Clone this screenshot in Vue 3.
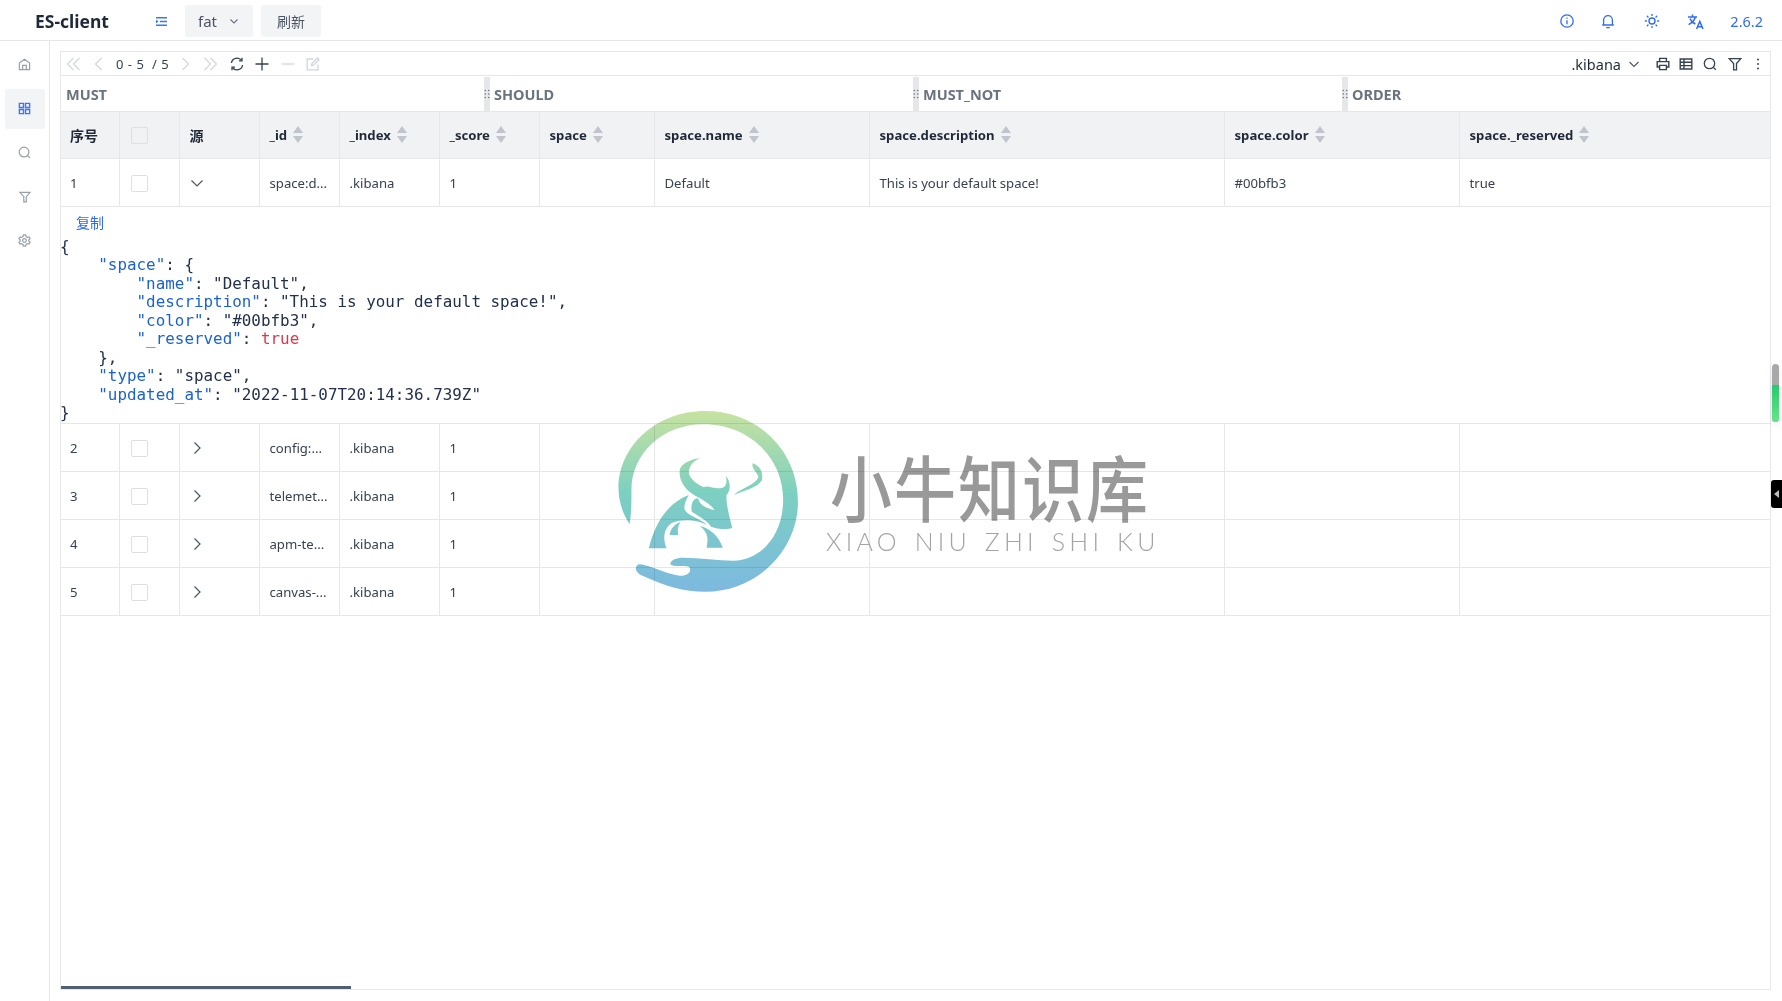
<script setup>
import { ref } from 'vue'

const columns = [
  { key: 'seq', label: '序号', width: 58, cjk: true },
  { key: 'check', label: '', width: 60 },
  { key: 'source', label: '源', width: 80, cjk: true },
  { key: '_id', label: '_id', width: 80, sort: true },
  { key: '_index', label: '_index', width: 100, sort: true },
  { key: '_score', label: '_score', width: 100, sort: true },
  { key: 'space', label: 'space', width: 115, sort: true },
  { key: 'name', label: 'space.name', width: 215, sort: true },
  { key: 'description', label: 'space.description', width: 355, sort: true },
  { key: 'color', label: 'space.color', width: 235, sort: true },
  { key: 'reserved', label: 'space._reserved', width: 311, sort: true },
]

const rows = ref([
  { seq: 1, _id: 'space:d...', _index: '.kibana', _score: 1, name: 'Default', description: 'This is your default space!', color: '#00bfb3', reserved: 'true', open: true },
  { seq: 2, _id: 'config:...', _index: '.kibana', _score: 1 },
  { seq: 3, _id: 'telemet...', _index: '.kibana', _score: 1 },
  { seq: 4, _id: 'apm-te...', _index: '.kibana', _score: 1 },
  { seq: 5, _id: 'canvas-...', _index: '.kibana', _score: 1 },
])

const filters = ['MUST', 'SHOULD', 'MUST_NOT', 'ORDER']
</script>

<template>
  <div class="page">
    <header class="top">
      <div class="brand">ES-client</div>
      <svg class="menu-icon" width="11" height="9" viewBox="0 0 11 9" fill="none" stroke="#3b76f6" stroke-width="1.4">
        <path d="M0 .8h11M4 4.5h7M0 8.2h11" />
        <path d="M0 2.8l2.6 1.7L0 6.2z" fill="#3b76f6" stroke="none" />
      </svg>
      <div class="pill select">
        <span>fat</span>
        <svg width="12" height="12" viewBox="0 0 12 12" fill="none" stroke="#6b7280" stroke-width="1.1"><path d="M2.5 4.5L6 8l3.5-3.5" /></svg>
      </div>
      <div class="pill refresh">刷新</div>
      <div class="top-right">
        <svg width="16" height="16" viewBox="0 0 16 16" fill="none" stroke="#2f6bf2" stroke-width="1.3">
          <circle cx="8" cy="8" r="6.2" /><path d="M8 7.2v4" /><path d="M8 4.4v1.4" />
        </svg>
        <svg class="bell" width="14" height="16" viewBox="0 0 14 16" fill="none" stroke="#2f6bf2" stroke-width="1.3">
          <path d="M2.6 11.5V7a4.4 4.4 0 0 1 8.8 0v4.5M1.2 12h11.6M5.2 14.6h3.6" />
        </svg>
        <svg class="sun" width="16" height="16" viewBox="0 0 16 16" fill="none" stroke="#2f6bf2" stroke-width="1.4">
          <circle cx="8" cy="8" r="3" />
          <path stroke-linecap="round" d="M8 1.4v1M8 13.6v1M1.4 8h1M13.6 8h1M3.3 3.3l.7.7M12 12l.7.7M3.3 12.7l.7-.7M12 4l.7-.7" />
        </svg>
        <svg class="lang" width="18" height="17" viewBox="0 0 18 17" fill="none" stroke="#2f6bf2" stroke-width="1.5">
          <path d="M1 4h9M5.5 1.5V4M8.4 4C7.4 7.4 5 10 1.6 11.6M3 5.6c1 2.4 3 4.4 5.4 5.4" />
          <path d="M9.6 16l3.2-7.6L16 16M10.8 13.8h4" />
        </svg>
        <span class="version">2.6.2</span>
      </div>
    </header>

    <div class="body">
      <aside class="side">
        <div class="side-item">
          <svg width="13" height="13" viewBox="0 0 14 14" fill="none" stroke="#9aa0a8" stroke-width="1.3">
            <path d="M1.5 12.5V5.4L7 1.4l5.5 4v7.1zM5 12.5V8h4v4.5" />
          </svg>
        </div>
        <div class="side-item active">
          <svg width="13" height="13" viewBox="0 0 14 14" fill="none" stroke="#3b76f6" stroke-width="1.5">
            <path d="M1.5 1.5h4.4v4.4H1.5zM8.1 1.5h4.4v4.4H8.1zM1.5 8.1h4.4v4.4H1.5zM8.1 8.1h4.4v4.4H8.1z" />
          </svg>
        </div>
        <div class="side-item">
          <svg width="13" height="13" viewBox="0 0 14 14" fill="none" stroke="#9aa0a8" stroke-width="1.3">
            <circle cx="6.5" cy="6.5" r="5.2" /><path d="M10.4 10.4l2.4 2.4" />
          </svg>
        </div>
        <div class="side-item">
          <svg width="12" height="12" viewBox="0 0 14 14" fill="none" stroke="#9aa0a8" stroke-width="1.4">
            <path d="M1 1.6h12L8.5 6.6v6.2H5.6V6.6z" />
          </svg>
        </div>
        <div class="side-item">
          <svg width="13" height="13" viewBox="0 0 14 14" fill="none" stroke="#9aa0a8" stroke-width="1.3">
            <path d="M5.8 1h2.4l.4 1.7 1.5.9 1.7-.5 1.2 2-1.3 1.2v1.4l1.3 1.2-1.2 2-1.7-.5-1.5.9L8.2 13H5.8l-.4-1.7-1.5-.9-1.7.5-1.2-2 1.3-1.2V6.3L1 5.1l1.2-2 1.7.5 1.5-.9z" />
            <circle cx="7" cy="7" r="2" />
          </svg>
        </div>
      </aside>

      <main class="main">
        <div class="toolbar">
          <svg class="t1" width="15" height="14" viewBox="0 0 15 14" fill="none" stroke="#d1d5db" stroke-width="1.2"><path d="M7.5 1L1.5 7l6 6M13.5 1l-6 6 6 6" /></svg>
          <svg class="t2" width="9" height="14" viewBox="0 0 9 14" fill="none" stroke="#d1d5db" stroke-width="1.2"><path d="M7.5 1L1.5 7l6 6" /></svg>
          <span class="pager">0 - 5&nbsp;&nbsp;/ 5</span>
          <svg class="t3" width="9" height="14" viewBox="0 0 9 14" fill="none" stroke="#d1d5db" stroke-width="1.2"><path d="M1.5 1l6 6-6 6" /></svg>
          <svg class="t4" width="15" height="14" viewBox="0 0 15 14" fill="none" stroke="#d1d5db" stroke-width="1.2"><path d="M1.5 1l6 6-6 6M7.5 1l6 6-6 6" /></svg>
          <svg class="t5" width="14" height="14" viewBox="0 0 14 14" fill="none" stroke="#374151" stroke-width="1.3">
            <path d="M1.4 6A5.7 5.7 0 0 1 11.6 3.4M12.6 8A5.7 5.7 0 0 1 2.4 10.6" />
            <path d="M12 .8v3h-3M2 13.2v-3h3" />
          </svg>
          <svg class="t6" width="14" height="14" viewBox="0 0 14 14" fill="none" stroke="#374151" stroke-width="1.3"><path d="M7 .5v13M.5 7h13" /></svg>
          <svg class="t7" width="14" height="14" viewBox="0 0 14 14" fill="none" stroke="#d1d5db" stroke-width="1.3"><path d="M.5 7h13" /></svg>
          <svg class="t8" width="14" height="14" viewBox="0 0 14 14" fill="none" stroke="#d1d5db" stroke-width="1.3">
            <path d="M12 7.5v5.3H1.2V2H7M5.5 8.6l.4-2L11.4 1l1.7 1.7-5.6 5.5z" />
          </svg>
          <div class="tool-right">
            <span class="index-name">.kibana</span>
            <svg class="r0" width="12" height="12" viewBox="0 0 12 12" fill="none" stroke="#4b5563" stroke-width="1.1"><path d="M1.5 4L6 8.5 10.5 4" /></svg>
            <svg class="r1" width="14" height="14" viewBox="0 0 14 14" fill="none" stroke="#374151" stroke-width="1.4">
              <path d="M3.6 4.5V1.4h6.8v3.1M3.4 10H1.2V4.6h11.6V10h-2.2M3.6 8.4h6.8v4.2H3.6z" />
            </svg>
            <svg class="r2" width="14" height="14" viewBox="0 0 14 14" fill="none" stroke="#374151" stroke-width="1.4">
              <path d="M1.2 2h11.6v10H1.2zM1.2 5.3h11.6M1.2 8.6h11.6M5 2v10" />
            </svg>
            <svg class="r3" width="14" height="14" viewBox="0 0 14 14" fill="none" stroke="#374151" stroke-width="1.3">
              <circle cx="6.5" cy="6.5" r="5.2" /><path d="M10.4 10.4l2.4 2.4" />
            </svg>
            <svg class="r4" width="14" height="14" viewBox="0 0 14 14" fill="none" stroke="#374151" stroke-width="1.3">
              <path d="M1.2 1.6h11.6L8.5 6.6v6.2H5.6V6.6z" />
            </svg>
            <svg class="r5" width="4" height="14" viewBox="0 0 4 14" fill="#4b5563">
              <circle cx="2" cy="2.5" r="1.1" /><circle cx="2" cy="7" r="1.1" /><circle cx="2" cy="11.5" r="1.1" />
            </svg>
          </div>
        </div>

        <div class="filters">
          <div v-for="(f, i) in filters" :key="f" class="filter-cell">
            <div v-if="i > 0" class="handle">
              <svg width="6" height="10" viewBox="0 0 6 10" fill="#6b7280">
                <circle cx="1.3" cy="1.5" r=".8" /><circle cx="4.7" cy="1.5" r=".8" />
                <circle cx="1.3" cy="5" r=".8" /><circle cx="4.7" cy="5" r=".8" />
                <circle cx="1.3" cy="8.5" r=".8" /><circle cx="4.7" cy="8.5" r=".8" />
              </svg>
            </div>
            <span class="filter-name">{{ f }}</span>
          </div>
        </div>

        <table class="grid">
          <colgroup>
            <col v-for="c in columns" :key="c.key" :style="{ width: c.width + 'px' }" />
          </colgroup>
          <thead>
            <tr>
              <th v-for="c in columns" :key="c.key">
                <span v-if="c.key === 'check'" class="box"></span>
                <span v-else class="th-in" :class="{ cjk: c.cjk }">
                  {{ c.label }}
                  <span v-if="c.sort" class="sort"><i class="up"></i><i class="down"></i></span>
                </span>
              </th>
            </tr>
          </thead>
          <tbody>
            <template v-for="r in rows" :key="r.seq">
              <tr class="data-row">
                <td>{{ r.seq }}</td>
                <td><span class="box"></span></td>
                <td>
                  <svg class="arrow" width="14" height="14" viewBox="0 0 14 14" fill="none" stroke="#4b5563" stroke-width="1.2">
                    <path v-if="r.open" d="M1.5 4.5L7 10l5.5-5.5" />
                    <path v-else d="M4.5 1.5L10 7l-5.5 5.5" />
                  </svg>
                </td>
                <td>{{ r._id }}</td>
                <td>{{ r._index }}</td>
                <td>{{ r._score }}</td>
                <td></td>
                <td>{{ r.name }}</td>
                <td>{{ r.description }}</td>
                <td>{{ r.color }}</td>
                <td>{{ r.reserved }}</td>
              </tr>
              <tr v-if="r.open" class="expand-row">
                <td colspan="11">
                  <a class="copy">复制</a>
                  <pre class="code"><span class="p">{</span>
    <span class="k">"space"</span><span class="p">: {</span>
        <span class="k">"name"</span><span class="p">: "Default",</span>
        <span class="k">"description"</span><span class="p">: "This is your default space!",</span>
        <span class="k">"color"</span><span class="p">: "#00bfb3",</span>
        <span class="k">"_reserved"</span><span class="p">: </span><span class="b">true</span>
    <span class="p">},</span>
    <span class="k">"type"</span><span class="p">: "space",</span>
    <span class="k">"updated_at"</span><span class="p">: "2022-11-07T20:14:36.739Z"</span>
<span class="p">}</span></pre>
                </td>
              </tr>
            </template>
          </tbody>
        </table>

        <div class="fill"></div>
        <div class="hscroll"><div class="hthumb"></div></div>
      </main>
    </div>

    <!-- 右側のスクロールつまみ -->
    <div class="pill-scroll"><div class="pill-green"></div></div>
    <div class="side-tab"><i></i></div>

    <!-- 透かし -->
    <div class="watermark">
      <svg class="wm-logo" width="222" height="210" viewBox="0 0 600 630" preserveAspectRatio="none">
        <defs>
          <linearGradient id="wm" gradientUnits="userSpaceOnUse" x1="0" y1="33" x2="0" y2="575">
            <stop offset="0" stop-color="#c8e2a0" />
            <stop offset=".45" stop-color="#7cd0c0" />
            <stop offset="1" stop-color="#7db9e0" />
          </linearGradient>
        </defs>
        <g fill="url(#wm)">
          <path d="M80 372C60 340 50 300 50 265C50 140 150 33 285 33C425 33 535 150 535 305C535 450 425 575 285 575C225 575 180 560 110 525C95 515 92 500 105 493C125 490 170 520 215 527C240 528 250 510 240 500C225 497 200 502 190 493C190 480 205 473 225 473C270 473 320 482 360 482C440 480 495 400 495 300C495 170 400 73 280 73C170 73 85 160 85 270C85 310 85 340 80 372Z" />
          <path d="M270 175C240 178 215 195 215 215C215 250 235 275 270 295C285 305 300 315 310 330C285 325 270 315 265 295C250 295 245 315 248 335C260 345 290 360 300 380C320 388 345 390 357 383C350 350 340 310 342 285C355 270 352 240 340 228C345 250 340 262 325 265C300 265 290 255 280 262C260 250 240 235 240 215C242 195 255 182 270 175Z" />
          <path d="M240 285C190 305 150 360 132 445L180 445C170 420 170 385 195 368C225 355 265 360 290 375C270 355 230 345 228 325C228 310 235 295 240 285Z" />
          <path d="M217 367C205 370 190 385 188 405L212 405C208 390 212 378 217 367Z" />
          <path d="M270 378C295 385 320 405 332 443L288 443C292 420 295 400 270 378Z" />
          <path d="M412 190C430 195 442 215 438 240C425 265 390 270 362 285C380 265 420 255 428 232C425 215 410 210 412 190Z" />
        </g>
      </svg>
      <div class="wm-text">
        <div class="wm-cn">小牛知识库</div>
        <div class="wm-en">XIAO NIU ZHI SHI KU</div>
      </div>
    </div>
  </div>
</template>

<style>
html, body {
  margin: 0;
  background: #fff;
}
</style>

<style scoped>
.page {
  position: relative;
  width: 1782px;
  height: 1001px;
  overflow: hidden;
  display: flex;
  flex-direction: column;
  font-family: "Noto Sans", "Noto Sans CJK SC", sans-serif;
  font-size: 13.15px;
  color: #374151;
}

.top {
  height: 41px;
  flex: none;
  display: flex;
  align-items: center;
  padding-top: 2px;
  border-bottom: 1px solid #e5e7eb;
  box-sizing: border-box;
}
.brand {
  margin-left: 35px;
  width: 121px;
  font-size: 17.5px;
  font-weight: 700;
  color: #1f2937;
}
.menu-icon {
  margin-right: 18px;
}
.pill {
  height: 32px;
  background: #f3f4f6;
  border-radius: 3px;
  display: flex;
  align-items: center;
  color: #4b5563;
  font-size: 14px;
}
.select {
  width: 68px;
  padding: 0 13px;
  box-sizing: border-box;
  justify-content: space-between;
  margin-right: 8px;
  font-size: 15px;
}
.refresh {
  width: 60px;
  justify-content: center;
}
.top-right {
  margin-left: auto;
  display: flex;
  align-items: center;
  margin-right: 19px;
  color: #2f6bf2;
}
.bell { margin-left: 26px; }
.sun { margin-left: 29px; }
.lang { margin-left: 27px; }
.version {
  font-size: 14.5px;
  margin-left: 25px;
}

.body {
  flex: 1;
  display: flex;
  min-height: 0;
}
.side {
  width: 44px;
  flex: none;
  border-right: 1px solid #e5e7eb;
  padding: 4px 0 0 5px;
  box-sizing: content-box;
  margin-right: 10px;
  display: flex;
  flex-direction: column;
  gap: 4px;
}
.side-item {
  width: 40px;
  height: 40px;
  border-radius: 3px;
  display: flex;
  align-items: center;
  justify-content: center;
}
.side-item svg {
  margin: 0 1px 1px 0;
}
.side-item.active {
  background: #f3f4f6;
}

.main {
  width: 1711px;
  flex: none;
  margin-top: 10px;
  margin-bottom: 11px;
  display: flex;
  flex-direction: column;
  border-left: 1px solid #e5e7eb;
  border-right: 1px solid #e5e7eb;
  box-sizing: border-box;
}
.toolbar {
  height: 25px;
  flex: none;
  display: flex;
  align-items: center;
  padding-top: 1px;
  border-top: 1px solid #e5e7eb;
  border-bottom: 1px solid #e5e7eb;
  box-sizing: border-box;
  color: #374151;
}
.t1 { margin-left: 5px; }
.t2 { margin-left: 13px; }
.pager { margin-left: 13px; width: 60px; font-size: 13px; white-space: nowrap; letter-spacing: .5px; }
.t3 { margin-left: 5px; }
.t4 { margin-left: 13px; }
.t5 { margin-left: 12px; }
.t6 { margin-left: 11px; }
.t7 { margin-left: 12px; }
.t8 { margin-left: 11px; }
.tool-right {
  margin-left: auto;
  display: flex;
  align-items: center;
  margin-right: 10px;
}
.index-name {
  font-size: 14.5px;
  color: #1f2937;
}
.r0 { margin-left: 7px; }
.r1 { margin-left: 16px; }
.r2 { margin-left: 9px; }
.r3 { margin-left: 10px; }
.r4 { margin-left: 11px; }
.r5 { margin-left: 14px; }

.filters {
  height: 36px;
  flex: none;
  display: grid;
  grid-template-columns: 423px 429px 429px 1fr;
  border-bottom: 1px solid #e5e7eb;
  box-sizing: border-box;
  padding-top: 1px;
}
.filter-cell {
  display: flex;
  align-items: center;
}
.filter-cell:first-child {
  padding-left: 5px;
}
.handle {
  width: 6px;
  height: 100%;
  background: #e5e7eb;
  display: flex;
  align-items: center;
  justify-content: center;
  margin-right: 4px;
}
.filter-name {
  font-size: 14.5px;
  font-weight: 700;
  color: #6b7280;
}

.grid {
  width: 1709px;
  flex: none;
  table-layout: fixed;
  border-collapse: collapse;
}
.grid th,
.grid td {
  border-right: 1px solid #e5e7eb;
  border-bottom: 1px solid #e5e7eb;
  text-align: left;
  padding: 0 10px;
  box-sizing: border-box;
  white-space: nowrap;
  overflow: hidden;
}
.grid th:first-child,
.grid td:first-child {
  padding-left: 9px;
}
.grid th:last-child,
.grid td:last-child {
  border-right: none;
}
.grid th {
  height: 46px;
  background: #f1f2f4;
  font-size: 13.15px;
  font-weight: 700;
  color: #1f2937;
}
.grid .data-row td {
  height: 48px;
  padding-top: 1px;
  color: #374151;
}
.th-in {
  display: inline-flex;
  align-items: center;
  gap: 6px;
}
.th-in.cjk {
  font-size: 14px;
}
.sort {
  display: inline-flex;
  flex-direction: column;
  gap: 3px;
}
.sort i {
  display: block;
  width: 0;
  height: 0;
  border-left: 5.5px solid transparent;
  border-right: 5.5px solid transparent;
}
.sort .up {
  border-bottom: 7px solid #c0c4cc;
}
.sort .down {
  border-top: 7px solid #c0c4cc;
}
.box {
  display: block;
  width: 17px;
  height: 17px;
  box-sizing: border-box;
  margin: 2px 0 0 1px;
  border: 1.5px solid #dcdfe6;
  border-radius: 2px;
  background: #fff;
}
.grid th .box {
  background: #f1f2f4;
}
.arrow {
  display: block;
}
.grid .expand-row td {
  height: 216px;
  padding: 0;
  vertical-align: top;
}
.copy {
  display: block;
  height: 31px;
  line-height: 31px;
  padding-left: 15px;
  color: #2f6bf2;
  font-size: 14px;
}
.code {
  margin: 0 0 0 -1px;
  font-family: "DejaVu Sans Mono", "Liberation Mono", monospace;
  font-size: 15.9px;
  line-height: 18.5px;
}
.k { color: #1a62d0; }
.p { color: #22304d; }
.b { color: #e0364a; }

.fill {
  flex: 1;
}
.hscroll {
  height: 3px;
  flex: none;
  border-bottom: 1px solid #e5e7eb;
  box-sizing: content-box;
}
.hthumb {
  width: 290px;
  height: 3px;
  background: #515f75;
}

.pill-scroll {
  position: absolute;
  left: 1772px;
  top: 364px;
  width: 7px;
  height: 58px;
  border-radius: 4px;
  background: #a8a8a8;
  overflow: hidden;
  box-shadow: 0 2px 6px rgba(0, 0, 0, .08);
}
.pill-green {
  margin-top: 21px;
  height: 37px;
  background: linear-gradient(#27c96c, #66e58a);
}
.side-tab {
  position: absolute;
  left: 1771px;
  top: 480px;
  width: 11px;
  height: 28px;
  background: #000;
  border-radius: 3px 0 0 3px;
  display: flex;
  align-items: center;
  justify-content: center;
}
.side-tab i {
  width: 0;
  height: 0;
  border-top: 4px solid transparent;
  border-bottom: 4px solid transparent;
  border-right: 5px solid #bbb;
}

.watermark {
  position: absolute;
  left: 600px;
  top: 400px;
  display: flex;
  pointer-events: none;
  mix-blend-mode: multiply;
}
.wm-text {
  margin-left: 8px;
  padding-top: 54px;
}
.wm-cn {
  font-size: 62px;
  line-height: 62px;
  letter-spacing: 2px;
  color: #999;
  font-family: "Noto Sans CJK SC", sans-serif;
  font-weight: 500;
  transform: scaleY(1.16);
}
.wm-en {
  margin-top: 10px;
  margin-left: -4px;
  font-family: Lato, "Noto Sans", sans-serif;
  font-weight: 300;
  font-size: 25px;
  line-height: 30px;
  letter-spacing: 4.2px;
  word-spacing: 3px;
  white-space: nowrap;
  color: #a4a4a4;
}
</style>
